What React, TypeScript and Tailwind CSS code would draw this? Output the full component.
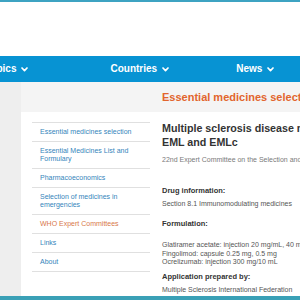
import React from "react";

const navItems = [
  { label: "Topics", className: "ml-[-15px]" },
  { label: "Countries", className: "ml-[82px]" },
  { label: "News", className: "ml-[67px]" },
];

const sideLinks = [
  { label: "Essential medicines selection" },
  { label: "Essential Medicines List and Formulary" },
  { label: "Pharmacoeconomics" },
  { label: "Selection of medicines in emergencies" },
  { label: "WHO Expert Committees", active: true },
  { label: "Links" },
  { label: "About" },
];

function Chevron() {
  return (
    <svg width="7" height="5" viewBox="0 0 7 5" fill="none" className="ml-[5px] mt-[1px]">
      <path d="M1 1 L3.5 3.6 L6 1" stroke="white" strokeWidth="1.7" strokeLinecap="round" strokeLinejoin="round" />
    </svg>
  );
}

export default function App() {
  return (
    <div className="w-[300px] h-[300px] overflow-hidden bg-white flex flex-col font-['Liberation_Sans',Arial,sans-serif]">
      {/* top rule */}
      <div className="h-[2px] bg-[#3ea3c2] shrink-0" />

      {/* header */}
      <div className="h-[54px] shrink-0 bg-white" />

      {/* nav */}
      <div className="h-[26px] shrink-0 bg-[#0793d3] flex items-center whitespace-nowrap">
        {navItems.map((item) => (
          <div key={item.label} className={`flex items-center shrink-0 ${item.className}`}>
            <span className="text-white font-bold text-[10px] leading-none">{item.label}</span>
            <Chevron />
          </div>
        ))}
      </div>

      {/* body */}
      <div className="flex-1 flex bg-[#eeeeee] min-h-0">
        <div className="w-[21px] shrink-0" />
        <div className="flex-1 flex flex-col min-w-0">
          <div className="h-[30px] shrink-0 bg-[#f4f4f4] flex items-center pl-[141px] whitespace-nowrap">
            <span className="text-[#e2652d] font-bold text-[11px] leading-none">
              Essential medicines selection
            </span>
          </div>

          <div className="flex-1 bg-white flex pl-[11px] min-h-0">
            {/* sidebar */}
            <ul className="w-[118px] shrink-0 pt-[10px]">
              {sideLinks.map((link, i) => (
                <li
                  key={link.label}
                  className={`border-t border-[#e0e0e0] py-[5px] pl-[8px] pr-[6px] text-[7px] leading-[8px] ${
                    i === sideLinks.length - 1 ? "border-b" : ""
                  } ${link.active ? "text-[#d8784a]" : "text-[#3585bb]"}`}
                >
                  {link.label}
                </li>
              ))}
            </ul>

            {/* main */}
            <div className="ml-[12px] pt-[9px] whitespace-nowrap">
              <h1 className="text-[10.7px] leading-[14px] font-bold text-[#333333]">
                Multiple sclerosis disease modifying therapies –
                <br />
                EML and EMLc
              </h1>
              <p className="mt-[7px] text-[7px] leading-[8.5px] text-[#7a7a7a]">
                22nd Expert Committee on the Selection and Use of Essential Medicines
              </p>

              <h2 className="mt-[21px] text-[7.5px] leading-[10px] font-bold text-[#333333]">Drug information:</h2>
              <p className="mt-[4px] text-[7px] leading-[8.5px] text-[#555555]">
                Section 8.1 Immunomodulating medicines
              </p>

              <h2 className="mt-[11px] text-[7.5px] leading-[10px] font-bold text-[#333333]">Formulation:</h2>
              <p className="mt-[12px] text-[7px] leading-[8.5px] text-[#555555]">
                Glatiramer acetate: injection 20 mg/mL, 40 mg/mL
                <br />
                Fingolimod: capsule 0.25 mg, 0.5 mg
                <br />
                Ocrelizumab: injection 300 mg/10 mL
              </p>

              <h2 className="mt-[5px] text-[7.5px] leading-[10px] font-bold text-[#333333]">
                Application prepared by:
              </h2>
              <p className="mt-[4px] text-[7px] leading-[8.5px] text-[#555555]">
                Multiple Sclerosis International Federation
              </p>
            </div>
          </div>
        </div>
      </div>

      {/* bottom rule */}
      <div className="h-[4px] shrink-0 bg-[#3aa0b6]" />
    </div>
  );
}
